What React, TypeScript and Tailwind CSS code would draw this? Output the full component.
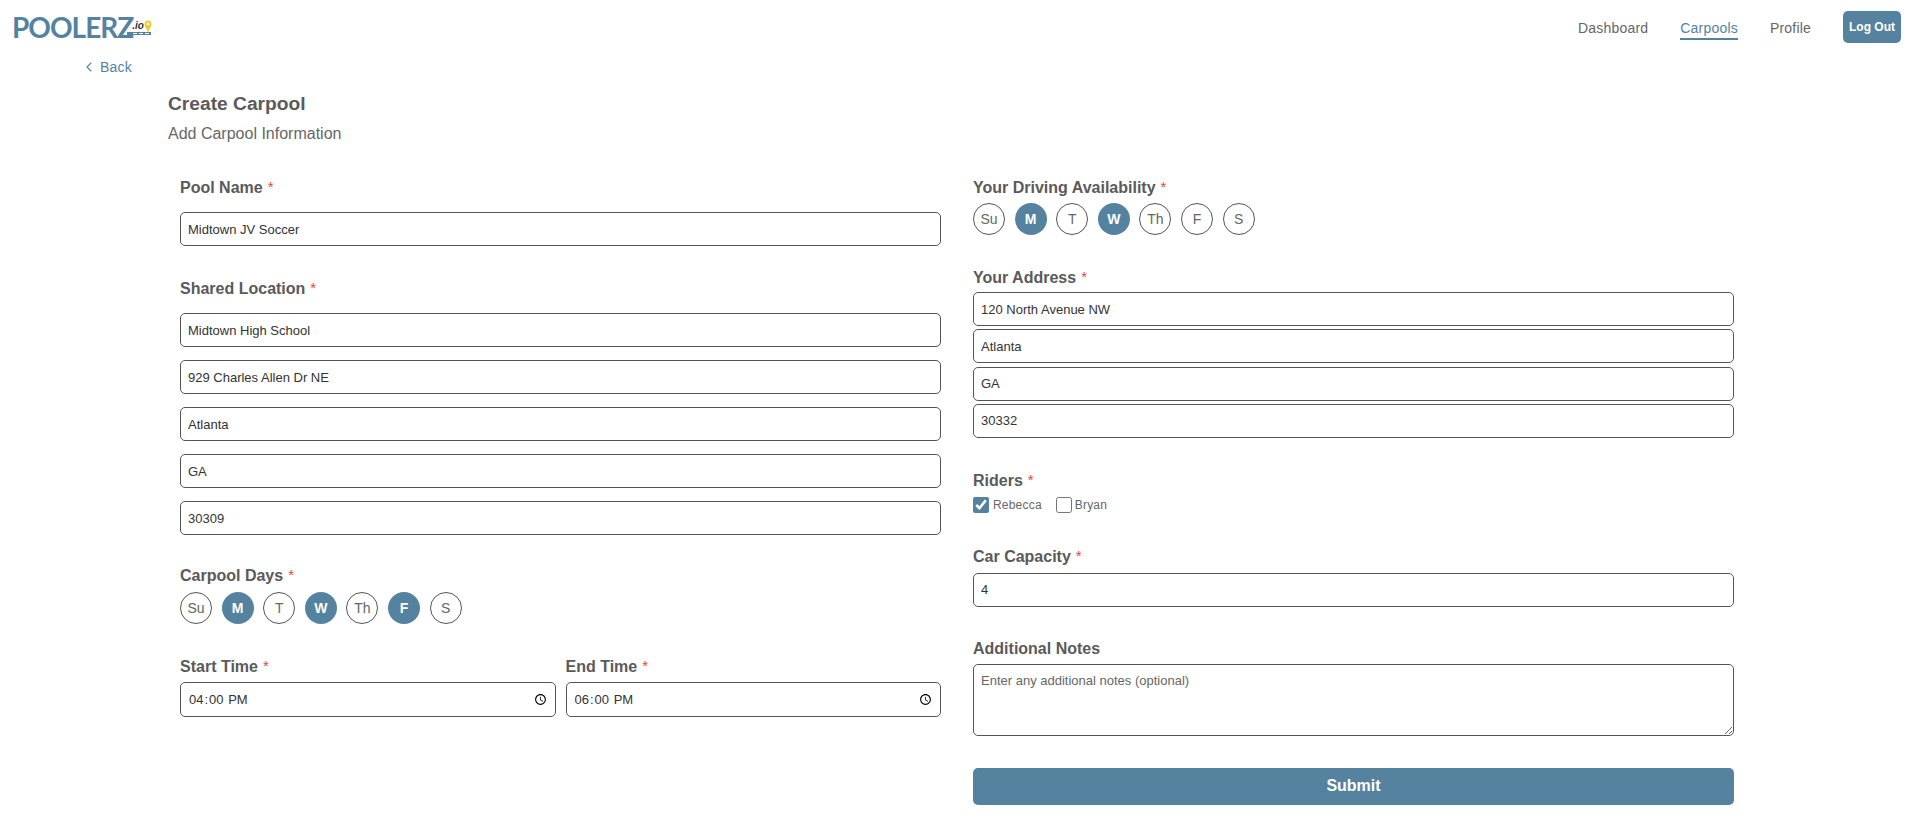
import { ChevronLeft } from 'lucide-react'

const days = ['Su', 'M', 'T', 'W', 'Th', 'F', 'S']

const inputClass =
  'block w-full rounded-[5px] border border-[#555555] bg-white pl-[7px] text-[13px] text-[#333333] outline-none'

function Star() {
  return <span className="ml-[5px] align-[1px] text-[15px] font-normal text-[#e5473c]">*</span>
}

function Label({ text, required, className }: { text: string; required?: boolean; className: string }) {
  return (
    <div className={`h-5 text-[16px] leading-5 font-bold text-[#5a5a5a] ${className}`}>
      {text}
      {required && <Star />}
    </div>
  )
}

function TextInput({ value, className = '' }: { value: string; className?: string }) {
  return <input type="text" readOnly defaultValue={value} className={`${inputClass} h-[34px] pr-2 ${className}`} />
}

function DayPicker({ active, className }: { active: string[]; className: string }) {
  return (
    <div className={`flex gap-[9.6px] ${className}`}>
      {days.map((d) => (
        <div
          key={d}
          className={`flex h-8 w-8 items-center justify-center rounded-full text-[14px] ${
            active.includes(d)
              ? 'bg-[#55839f] font-bold text-white'
              : 'border border-[#555555] bg-white text-[#666666]'
          }`}
        >
          {d}
        </div>
      ))}
    </div>
  )
}

function Logo() {
  return (
    <div className="flex items-start">
      <span className="font-['Lato',sans-serif] text-[28px] leading-[30px] font-bold tracking-[-1px] text-[#55839f]">
        POOLERZ
      </span>
      <div className="relative h-[30px] w-[20px]">
        <span className="absolute top-[8px] left-[-1px] text-[10px] leading-3 font-bold text-[#333333] italic">
          .io
        </span>
        <svg className="absolute top-[8px] left-[11px]" width="8" height="13" viewBox="0 0 9 15">
          <path
            d="M4.5 0.5a4 4 0 0 1 4 4c0 3-2.5 5-4 10c-1.5-5-4-7-4-10a4 4 0 0 1 4-4z"
            fill="#f5c92e"
          />
          <circle cx="4.5" cy="4.5" r="1.6" fill="#ffffff" />
        </svg>
        <div className="absolute top-[20px] left-[-6px] flex h-[3px] w-[24px] gap-[2px] bg-[#55839f] py-[1px] pr-[2px] pl-[6px]">
          <div className="h-[1px] flex-1 bg-white" />
          <div className="h-[1px] flex-1 bg-white" />
          <div className="h-[1px] flex-1 bg-white" />
        </div>
      </div>
    </div>
  )
}

export default function App() {
  return (
    <div className="min-h-screen bg-white font-['Liberation_Sans',Arial,sans-serif] text-[#555555]">
      <header className="flex h-14 items-start justify-between pt-[11px] pr-[14px] pl-3">
        <div className="pt-px">
          <Logo />
        </div>
        <nav className="flex items-start text-[14px] leading-5 tracking-[0.2px]">
          <a className="mt-[7px] mr-8 text-[#666666]">Dashboard</a>
          <a className="mt-[7px] mr-8 border-b-2 border-[#55839f] text-[#55839f]">Carpools</a>
          <a className="mt-[7px] mr-8 text-[#666666]">Profile</a>
          <button className="h-8 w-[58px] rounded-[5px] bg-[#55839f] text-[12px] font-bold tracking-normal text-white">
            Log Out
          </button>
        </nav>
      </header>

      <a className="mt-px ml-[81px] flex h-5 items-center text-[14px] tracking-[0.2px] text-[#55839f]">
        <ChevronLeft size={16} strokeWidth={1.6} className="mr-[3px]" />
        Back
      </a>

      <div className="mt-[15px] pl-[168px]">
        <h1 className="h-6 text-[19.2px] leading-6 font-bold text-[#5a5a5a]">Create Carpool</h1>
        <p className="mt-[6px] h-6 text-[16px] leading-6 text-[#666666]">Add Carpool Information</p>
      </div>

      <form className="mt-[31px] ml-[180px] grid w-[1554px] grid-cols-2 gap-x-8 pb-[23px]">
        <div>
          <Label text="Pool Name" required className="" />
          <TextInput value="Midtown JV Soccer" className="mt-[15px]" />

          <Label text="Shared Location" required className="mt-8" />
          <div className="mt-[15px] flex flex-col gap-[13px]">
            <TextInput value="Midtown High School" />
            <TextInput value="929 Charles Allen Dr NE" />
            <TextInput value="Atlanta" />
            <TextInput value="GA" />
            <TextInput value="30309" />
          </div>

          <Label text="Carpool Days" required className="mt-[30px]" />
          <DayPicker active={['M', 'W', 'F']} className="mt-[7px]" />

          <div className="mt-8 flex gap-[10px]">
            <div className="flex-1">
              <Label text="Start Time" required className="" />
              <input type="time" defaultValue="16:00" className={`${inputClass} mt-[6px] h-[35px] pr-1`} />
            </div>
            <div className="flex-1">
              <Label text="End Time" required className="" />
              <input type="time" defaultValue="18:00" className={`${inputClass} mt-[6px] h-[35px] pr-1`} />
            </div>
          </div>
        </div>

        <div>
          <Label text="Your Driving Availability" required className="" />
          <DayPicker active={['M', 'W']} className="mt-[6px]" />

          <Label text="Your Address" required className="mt-8" />
          <div className="mt-[5px] flex flex-col gap-[3.3px]">
            <TextInput value="120 North Avenue NW" />
            <TextInput value="Atlanta" />
            <TextInput value="GA" />
            <TextInput value="30332" />
          </div>

          <Label text="Riders" required className="mt-8" />
          <div className="mt-[7px] flex h-4 items-center gap-[14px] text-[12px] tracking-[0.2px] text-[#666666]">
            <label className="flex items-center gap-[4px]">
              <input type="checkbox" readOnly checked className="m-0 h-4 w-4 accent-[#55839f]" />
              Rebecca
            </label>
            <label className="flex items-center gap-[3px]">
              <input type="checkbox" readOnly className="m-0 h-4 w-4 accent-[#55839f]" />
              Bryan
            </label>
          </div>

          <Label text="Car Capacity" required className="mt-[33px]" />
          <TextInput value="4" className="mt-[7px]" />

          <Label text="Additional Notes" className="mt-8" />
          <textarea
            readOnly
            placeholder="Enter any additional notes (optional)"
            className="mt-[5px] block h-[72px] w-full rounded-[5px] border border-[#555555] bg-white px-[7px] py-[6px] text-[13px] text-[#333333] outline-none placeholder:text-[#666666]"
          />

          <button
            type="button"
            className="mt-8 block h-[37px] w-full rounded-[5px] bg-[#55839f] text-[16px] font-bold text-white"
          >
            Submit
          </button>
        </div>
      </form>
    </div>
  )
}
